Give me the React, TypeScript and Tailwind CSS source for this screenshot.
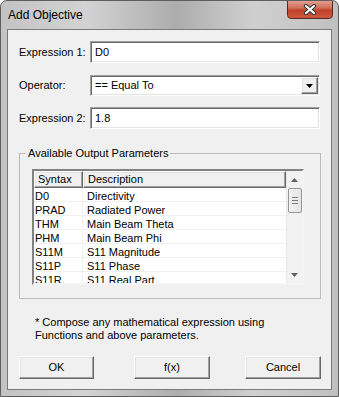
import React from "react";

const rows: [string, string][] = [
  ["D0", "Directivity"],
  ["PRAD", "Radiated Power"],
  ["THM", "Main Beam Theta"],
  ["PHM", "Main Beam Phi"],
  ["S11M", "S11 Magnitude"],
  ["S11P", "S11 Phase"],
  ["S11R", "S11 Real Part"],
];

const sunken =
  "border border-t-[#a0a0a0] border-l-[#a0a0a0] border-r-white border-b-white shadow-[inset_1px_1px_0_#696969,inset_-1px_-1px_0_#e3e3e3]";
const raised =
  "border border-t-white border-l-white border-r-[#696969] border-b-[#696969] shadow-[inset_-1px_-1px_0_#a0a0a0,inset_1px_1px_0_#e3e3e3]";

function Field({ label, value }: { label: string; value: string }) {
  return (
    <div className="flex items-center h-[22px]">
      <div className="w-[71px]">{label}</div>
      <div className={`w-[230px] h-[22px] bg-white flex items-center pl-[4px] ${sunken}`}>
        {value}
      </div>
    </div>
  );
}

function CloseGlyph() {
  return (
    <svg width="14" height="11" viewBox="0 0 14 11">
      <path d="M3 2 L11 9 M11 2 L3 9" stroke="#3a3a3a" strokeWidth="4.2" strokeLinecap="round" />
      <path d="M3 2 L11 9 M11 2 L3 9" stroke="#ffffff" strokeWidth="2.2" strokeLinecap="round" />
    </svg>
  );
}

function Arrow({ down, color = "#000" }: { down?: boolean; color?: string }) {
  return (
    <svg width="7" height="4" viewBox="0 0 7 4">
      <path d={down ? "M0 0 H7 L3.5 4 Z" : "M0 4 H7 L3.5 0 Z"} fill={color} />
    </svg>
  );
}

export default function App() {
  return (
    <div
      className="w-[339px] h-[397px] rounded-t-[7px] border border-[#5e5e5e] flex flex-col overflow-hidden text-[11px] text-black bg-[linear-gradient(to_right,#c3c3c3_0%,#d3d3d3_25%,#adadad_52%,#d0d0d0_75%,#c0c0c0_100%)]"
      style={{ fontFamily: '"Liberation Sans", Arial, sans-serif' }}
    >
      {/* title bar */}
      <div className="h-[28px] flex justify-between shrink-0">
        <div className="pl-[7px] pt-[7px] text-[12px] leading-[14px] text-black">Add Objective</div>
        <div className="mr-[5px] w-[46px] h-[19px] -mt-px rounded-b-[4px] border border-[#5a2a22] bg-[linear-gradient(to_bottom,#e4a090_0%,#d0705a_40%,#c0402a_55%,#cd5b40_100%)] flex items-center justify-center">
          <CloseGlyph />
        </div>
      </div>

      {/* client */}
      <div className="mx-[6px] mb-[6px] flex-1 border border-[#7a7a7a] bg-[#f0f0f0] pl-[11px] pt-[11px]">
        <Field label="Expression 1:" value="D0" />

        <div className="flex items-center h-[21px] mt-[12px]">
          <div className="w-[71px]">Operator:</div>
          <div className={`w-[230px] h-[21px] bg-white flex items-center ${sunken}`}>
            <div className="flex-1 pl-[4px]">== Equal To</div>
            <div className={`w-[17px] h-[17px] mr-px bg-[#f0f0f0] flex items-center justify-center ${raised}`}>
              <Arrow down />
            </div>
          </div>
        </div>

        <div className="mt-[11px]">
          <Field label="Expression 2:" value="1.8" />
        </div>

        {/* group box */}
        <div className="mt-[24px] w-[302px] h-[146px] border border-[#bcbcbc]">
          <div className="-mt-[7px] ml-[6px] px-[2px] w-fit bg-[#f0f0f0] leading-[13px]">
            Available Output Parameters
          </div>

          <div className="mt-[9px] ml-[12px] w-[272px] h-[116px] flex bg-white overflow-hidden border-2 border-t-[#828282] border-l-[#828282] border-r-[#f4f4f4] border-b-[#f4f4f4]">
            <div className="flex-1 flex flex-col overflow-hidden">
              <div className="flex h-[17px] shrink-0 bg-[#f0f0f0] leading-[15px]">
                <div className={`w-[49px] pl-[3px] ${raised}`}>Syntax</div>
                <div className={`flex-1 pl-[4px] ${raised}`}>Description</div>
              </div>
              {rows.map(([s, d]) => (
                <div key={s} className="flex h-[14px] shrink-0 leading-[16px] border-b border-[#f0f0f0]">
                  <div className="w-[49px] pl-[1px] border-r border-[#f0f0f0]">{s}</div>
                  <div className="flex-1 pl-[4px]">{d}</div>
                </div>
              ))}
            </div>

            {/* scrollbar */}
            <div className="w-[16px] bg-[#f2f2f2] flex flex-col items-center border-l border-[#e8e8e8]">
              <div className="h-[17px] flex items-center justify-center">
                <Arrow color="#606060" />
              </div>
              <div className="w-[14px] h-[25px] rounded-[2px] border border-[#979797] bg-[linear-gradient(to_right,#f3f3f3,#e4e4e4)] flex flex-col items-center justify-center gap-[2px]">
                <div className="w-[6px] h-px bg-[#7a7a7a]" />
                <div className="w-[6px] h-px bg-[#7a7a7a]" />
                <div className="w-[6px] h-px bg-[#7a7a7a]" />
              </div>
              <div className="flex-1" />
              <div className="h-[17px] flex items-center justify-center">
                <Arrow down color="#606060" />
              </div>
            </div>
          </div>
        </div>

        <div className="mt-[17px] ml-[16px] leading-[13px]">
          <div>* Compose any mathematical expression using</div>
          <div>Functions and above parameters.</div>
        </div>

        <div className="flex mt-[14px]">
          <div className={`w-[75px] h-[23px] flex items-center justify-center ${raised}`}>OK</div>
          <div className={`ml-[40px] w-[76px] h-[23px] flex items-center justify-center ${raised}`}>f(x)</div>
          <div className={`ml-[35px] w-[76px] h-[23px] flex items-center justify-center ${raised}`}>Cancel</div>
        </div>
      </div>
    </div>
  );
}
